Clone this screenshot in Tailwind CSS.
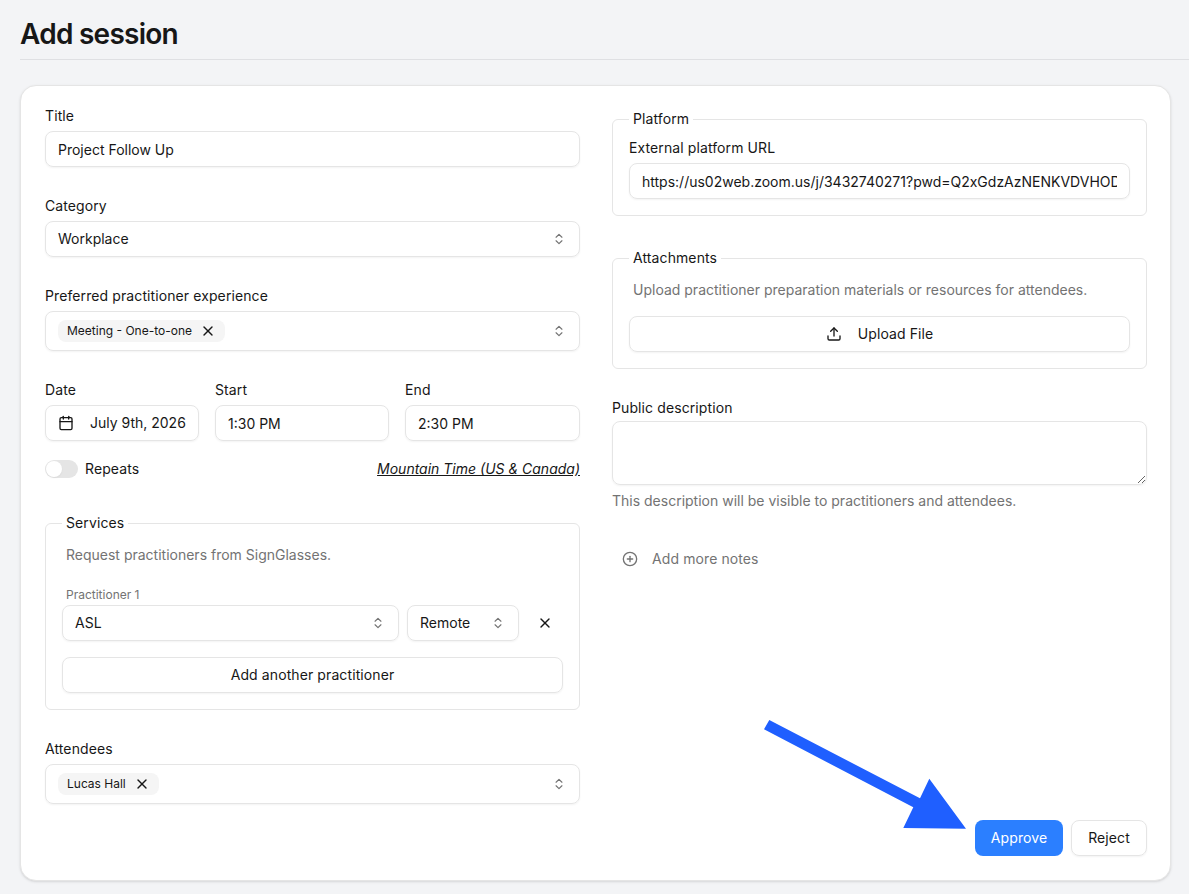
<!DOCTYPE html>
<html lang="en">
  <head>
    <meta charset="UTF-8" />
    <meta name="viewport" content="width=device-width, initial-scale=1.0" />
    <script src="https://cdn.jsdelivr.net/npm/@tailwindcss/browser@4"></script>
    <title>Add session</title>
  </head>
  <body class="relative h-[894px] overflow-hidden bg-gray-100 font-['Inter',sans-serif] text-sm text-neutral-900">
    <header class="ml-5 h-[60px] border-b border-[#dfe0e3]">
      <h1 class="pt-4 text-[28px] leading-9 font-semibold tracking-[-0.75px] text-neutral-900">Add session</h1>
    </header>

    <main class="mt-[25px] mr-[18px] ml-5 h-[796px] rounded-2xl border border-neutral-200 bg-white pt-5 pr-[23px] pl-6 shadow-sm">
      <form class="grid h-[774px] grid-cols-2 gap-8">
        <!-- left column -->
        <div class="flex flex-col">
          <label class="mb-[5px] block leading-5 tracking-[0.1px]">Title</label>
          <input type="text" value="Project Follow Up" class="h-9 w-full rounded-lg border border-neutral-200 px-3 shadow-xs" />

          <label class="mt-[29px] mb-[5px] block leading-5 tracking-[0.1px]">Category</label>
          <div class="flex h-9 items-center justify-between rounded-lg border border-neutral-200 pr-[13px] pl-3 shadow-xs">
            <span>Workplace</span>
            <svg class="size-3.5 text-neutral-500" viewBox="0 0 24 24" fill="none" stroke="currentColor" stroke-width="2" stroke-linecap="round" stroke-linejoin="round"><path d="m7 15 5 5 5-5" /><path d="m7 9 5-5 5 5" /></svg>
          </div>

          <label class="mt-[29px] mb-[5px] block leading-5 tracking-[0.1px]">Preferred practitioner experience</label>
          <div class="flex h-10 items-center justify-between rounded-lg border border-neutral-200 pr-[13px] pl-3 shadow-xs">
            <span class="flex h-[22px] items-center gap-2 rounded-lg bg-neutral-100 px-[9px] text-xs">
              Meeting - One-to-one
              <svg class="size-4" viewBox="0 0 24 24" fill="none" stroke="currentColor" stroke-width="2" stroke-linecap="round" stroke-linejoin="round"><path d="M18 6 6 18" /><path d="m6 6 12 12" /></svg>
            </span>
            <svg class="size-3.5 text-neutral-500" viewBox="0 0 24 24" fill="none" stroke="currentColor" stroke-width="2" stroke-linecap="round" stroke-linejoin="round"><path d="m7 15 5 5 5-5" /><path d="m7 9 5-5 5 5" /></svg>
          </div>

          <div class="mt-[29px] flex gap-4">
            <div class="w-[154px]">
              <label class="mb-[5px] block leading-5 tracking-[0.1px]">Date</label>
              <div class="flex h-9 items-center gap-4 rounded-lg border border-neutral-200 pl-3 shadow-xs">
                <svg class="size-4 shrink-0" viewBox="0 0 24 24" fill="none" stroke="currentColor" stroke-width="2" stroke-linecap="round" stroke-linejoin="round"><path d="M8 2v4" /><path d="M16 2v4" /><rect width="18" height="18" x="3" y="4" rx="2" /><path d="M3 10h18" /></svg>
                <span class="whitespace-nowrap">July 9th, 2026</span>
              </div>
            </div>
            <div class="w-[174px]">
              <label class="mb-[5px] block leading-5 tracking-[0.1px]">Start</label>
              <input type="text" value="1:30 PM" class="h-9 w-full rounded-lg border border-neutral-200 px-3 shadow-xs" />
            </div>
            <div class="flex-1">
              <label class="mb-[5px] block leading-5 tracking-[0.1px]">End</label>
              <input type="text" value="2:30 PM" class="h-9 w-full rounded-lg border border-neutral-200 px-3 shadow-xs" />
            </div>
          </div>

          <div class="mt-[18px] flex h-5 items-center justify-between">
            <div class="flex items-center gap-[7px]">
              <span class="flex h-[18px] w-[33px] items-center rounded-full bg-neutral-200 px-px">
                <span class="size-4 rounded-full bg-white shadow-xs"></span>
              </span>
              <span class="tracking-[0.1px]">Repeats</span>
            </div>
            <a href="#" class="italic underline">Mountain Time (US &amp; Canada)</a>
          </div>

          <fieldset class="mt-[34px] rounded-md border border-neutral-200 px-4 pb-4">
            <legend class="px-1 leading-5 tracking-[0.1px]">Services</legend>
            <p class="mt-3 px-1 leading-5 text-neutral-500">Request practitioners from SignGlasses.</p>
            <p class="mt-[22px] px-1 text-xs leading-4 text-neutral-500">Practitioner 1</p>
            <div class="mt-[2px] flex items-center gap-2">
              <div class="flex h-9 flex-1 items-center justify-between rounded-lg border border-neutral-200 pr-[13px] pl-3 shadow-xs">
                <span>ASL</span>
                <svg class="size-3.5 text-neutral-500" viewBox="0 0 24 24" fill="none" stroke="currentColor" stroke-width="2" stroke-linecap="round" stroke-linejoin="round"><path d="m7 15 5 5 5-5" /><path d="m7 9 5-5 5 5" /></svg>
              </div>
              <div class="flex h-9 w-28 items-center justify-between rounded-lg border border-neutral-200 pr-[13px] pl-3 shadow-xs">
                <span>Remote</span>
                <svg class="size-3.5 text-neutral-500" viewBox="0 0 24 24" fill="none" stroke="currentColor" stroke-width="2" stroke-linecap="round" stroke-linejoin="round"><path d="m7 15 5 5 5-5" /><path d="m7 9 5-5 5 5" /></svg>
              </div>
              <button type="button" class="flex size-9 items-center justify-center">
                <svg class="size-4" viewBox="0 0 24 24" fill="none" stroke="currentColor" stroke-width="2" stroke-linecap="round" stroke-linejoin="round"><path d="M18 6 6 18" /><path d="m6 6 12 12" /></svg>
              </button>
            </div>
            <button type="button" class="mt-4 h-9 w-full rounded-lg border border-neutral-200 tracking-[0.1px] shadow-xs">Add another practitioner</button>
          </fieldset>

          <label class="mt-[29px] mb-[5px] block leading-5 tracking-[0.1px]">Attendees</label>
          <div class="flex h-10 items-center justify-between rounded-lg border border-neutral-200 pr-[13px] pl-3 shadow-xs">
            <span class="flex h-[22px] items-center gap-2 rounded-lg bg-neutral-100 px-[9px] text-xs">
              Lucas Hall
              <svg class="size-4" viewBox="0 0 24 24" fill="none" stroke="currentColor" stroke-width="2" stroke-linecap="round" stroke-linejoin="round"><path d="M18 6 6 18" /><path d="m6 6 12 12" /></svg>
            </span>
            <svg class="size-3.5 text-neutral-500" viewBox="0 0 24 24" fill="none" stroke="currentColor" stroke-width="2" stroke-linecap="round" stroke-linejoin="round"><path d="m7 15 5 5 5-5" /><path d="m7 9 5-5 5 5" /></svg>
          </div>
        </div>

        <!-- right column -->
        <div class="flex flex-col pt-[3px]">
          <fieldset class="rounded-md border border-neutral-200 px-4 pb-4">
            <legend class="px-1 leading-5 tracking-[0.1px]">Platform</legend>
            <label class="mt-[9px] mb-[5px] block leading-5 tracking-[0.1px]">External platform URL</label>
            <input type="text" value="https://us02web.zoom.us/j/3432740271?pwd=Q2xGdzAzNENKVDVHODFqZz09" class="h-9 w-full rounded-lg border border-neutral-200 px-3 shadow-xs" />
          </fieldset>

          <fieldset class="mt-8 rounded-md border border-neutral-200 px-4 pb-4">
            <legend class="px-1 leading-5 tracking-[0.1px]">Attachments</legend>
            <p class="mt-3 px-1 leading-5 text-neutral-500">Upload practitioner preparation materials or resources for attendees.</p>
            <button type="button" class="mt-4 flex h-9 w-full items-center justify-center gap-4 rounded-lg border border-neutral-200 tracking-[0.1px] shadow-xs">
              <svg class="size-4" viewBox="0 0 24 24" fill="none" stroke="currentColor" stroke-width="2" stroke-linecap="round" stroke-linejoin="round"><path d="M21 15v4a2 2 0 0 1-2 2H5a2 2 0 0 1-2-2v-4" /><path d="m17 8-5-5-5 5" /><path d="M12 3v12" /></svg>
              Upload File
            </button>
          </fieldset>

          <label class="mt-[29px] mb-[3px] block leading-5 tracking-[0.1px]">Public description</label>
          <textarea class="h-16 w-full rounded-lg border border-neutral-200 px-3 py-2 shadow-xs"></textarea>
          <p class="mt-1.5 leading-5 text-neutral-500">This description will be visible to practitioners and attendees.</p>

          <button type="button" class="mt-[30px] flex h-9 w-fit items-center gap-3.5 pl-2.5 tracking-[0.1px] text-neutral-500">
            <svg class="size-4" viewBox="0 0 24 24" fill="none" stroke="currentColor" stroke-width="2" stroke-linecap="round" stroke-linejoin="round"><circle cx="12" cy="12" r="10" /><path d="M8 12h8" /><path d="M12 8v8" /></svg>
            Add more notes
          </button>

          <div class="mt-auto mb-6 flex justify-end gap-2">
            <button type="button" class="h-9 w-[88px] rounded-lg bg-blue-500 tracking-[0.1px] text-white">Approve</button>
            <button type="button" class="h-9 w-[76px] rounded-lg border border-neutral-200 tracking-[0.1px] shadow-xs">Reject</button>
          </div>
        </div>
      </form>
    </main>

    <!-- annotation arrow over the screenshot -->
    <svg class="absolute top-0 left-0 h-[894px] w-[1189px]" viewBox="0 0 1189 894" fill="#1f5fff"><path d="M769.3 720 764 729.3 913.3 807.3 903.3 828 966 828.7 929.3 778.7 920 798.3Z" /></svg>
  </body>
</html>
